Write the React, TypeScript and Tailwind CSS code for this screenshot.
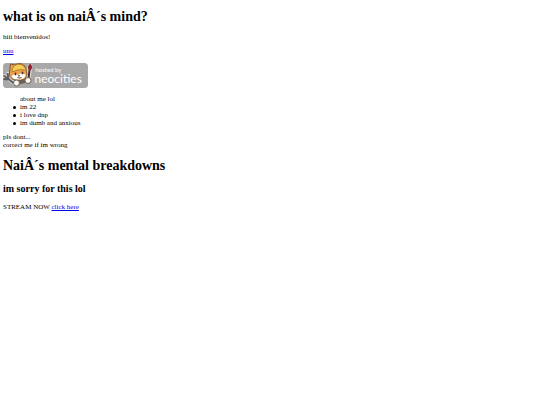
const facts = ['im 22', 'i love dnp', 'im dumb and anxious'];

function NeocitiesBadge() {
  return (
    <svg
      viewBox="0 0 170 50"
      className="block h-[25px] w-[85px]"
      role="img"
      aria-label="hosted by neocities"
    >
      <rect width="170" height="50" rx="7" fill="#a8a8a8" />
      {/* fork */}
      <path d="M2 26l9 6 11 9M10 21l2 11" stroke="#e4e4e4" strokeWidth="7" strokeLinecap="round" fill="none" />
      <path d="M1 25l10 7 11 9M9 20l2 12M1 32l10 1" stroke="#5c5c60" strokeWidth="4" fill="none" />
      {/* brush */}
      <path d="M54 6l-2 14-2 12" stroke="#e4e4e4" strokeWidth="9" strokeLinecap="round" fill="none" />
      <path d="M53 14l-2 18" stroke="#4a2a28" strokeWidth="4" strokeLinecap="round" fill="none" />
      <path d="M54 1c6 5 5 10 0 15-6-4-5-10 0-15z" fill="#8f2b30" />
      {/* cat */}
      <path d="M20 30l22 1 6 8-16 4z" fill="#6b625c" />
      <path
        d="M13 18L15 2l9 2c7-4 14-4 19 2l4 9 1 7c-1 9-7 12-16 12S15 32 13 24z"
        fill="#f0a04b"
        stroke="#8a5527"
        strokeWidth="2"
      />
      <path d="M18 16C18 0 40-2 45 11l2 4c-10-3-18-2-28 3z" fill="#f5cc55" stroke="#9a6a25" strokeWidth="1.5" />
      <path d="M17 27c4-5 9-6 13-3 4-4 10-4 15-1 0 7-5 10-13 10s-13-1-15-6z" fill="#fff" />
      <ellipse cx="25" cy="22" rx="1.8" ry="2.8" fill="#333" />
      <ellipse cx="39" cy="20" rx="1.8" ry="2.8" fill="#333" />
      <path d="M30 25h4l-2 2zM28 29c3 2 7 2 10 0" stroke="#55382a" fill="#55382a" />
      <circle cx="27" cy="40" r="6" fill="#fffaf0" stroke="#6d6258" strokeWidth="2" />
      <circle cx="50" cy="35" r="6" fill="#fffaf0" stroke="#6d6258" strokeWidth="2" />
      <g fill="#fff" fontFamily="Lato, 'Open Sans', sans-serif">
        <text x="65" y="18" fontSize="12">hosted by</text>
        <text x="63" y="39" fontSize="24">neocities</text>
      </g>
    </svg>
  );
}

export default function App() {
  return (
    <main className="bg-white px-[3px] pt-[9px] font-['Liberation_Serif',serif] text-[7px] leading-[8px] text-black">
      <h1 className="text-[14px] leading-[16px] font-bold">what is on naiÂ´s mind?</h1>
      <p className="mt-2">hiii bienvenidos!</p>
      <p className="mt-1.5">
        <a href="#unu" className="text-[#0000ee] underline">
          unu
        </a>
      </p>
      <a href="#neocities" className="mt-2 inline-block align-top">
        <NeocitiesBadge />
      </a>
      <ul className="mt-[7px] pl-[17px]">
        <li>about me lol</li>
        {facts.map((fact) => (
          <li
            key={fact}
            className="flex items-center before:mr-1 before:-ml-[7px] before:size-[3px] before:rounded-full before:bg-black"
          >
            {fact}
          </li>
        ))}
      </ul>
      <p className="mt-1.5">
        pls dont...
        <br />
        correct me if im wrong
      </p>
      <h1 className="mt-2 text-[14px] leading-[18px] font-bold">NaiÂ´s mental breakdowns</h1>
      <h2 className="mt-2 text-[10px] leading-[12px] font-bold">im sorry for this lol</h2>
      <p className="mt-2">
        STREAM NOW{' '}
        <a href="#stream" className="text-[#0000ee] underline">
          click here
        </a>
      </p>
    </main>
  );
}
